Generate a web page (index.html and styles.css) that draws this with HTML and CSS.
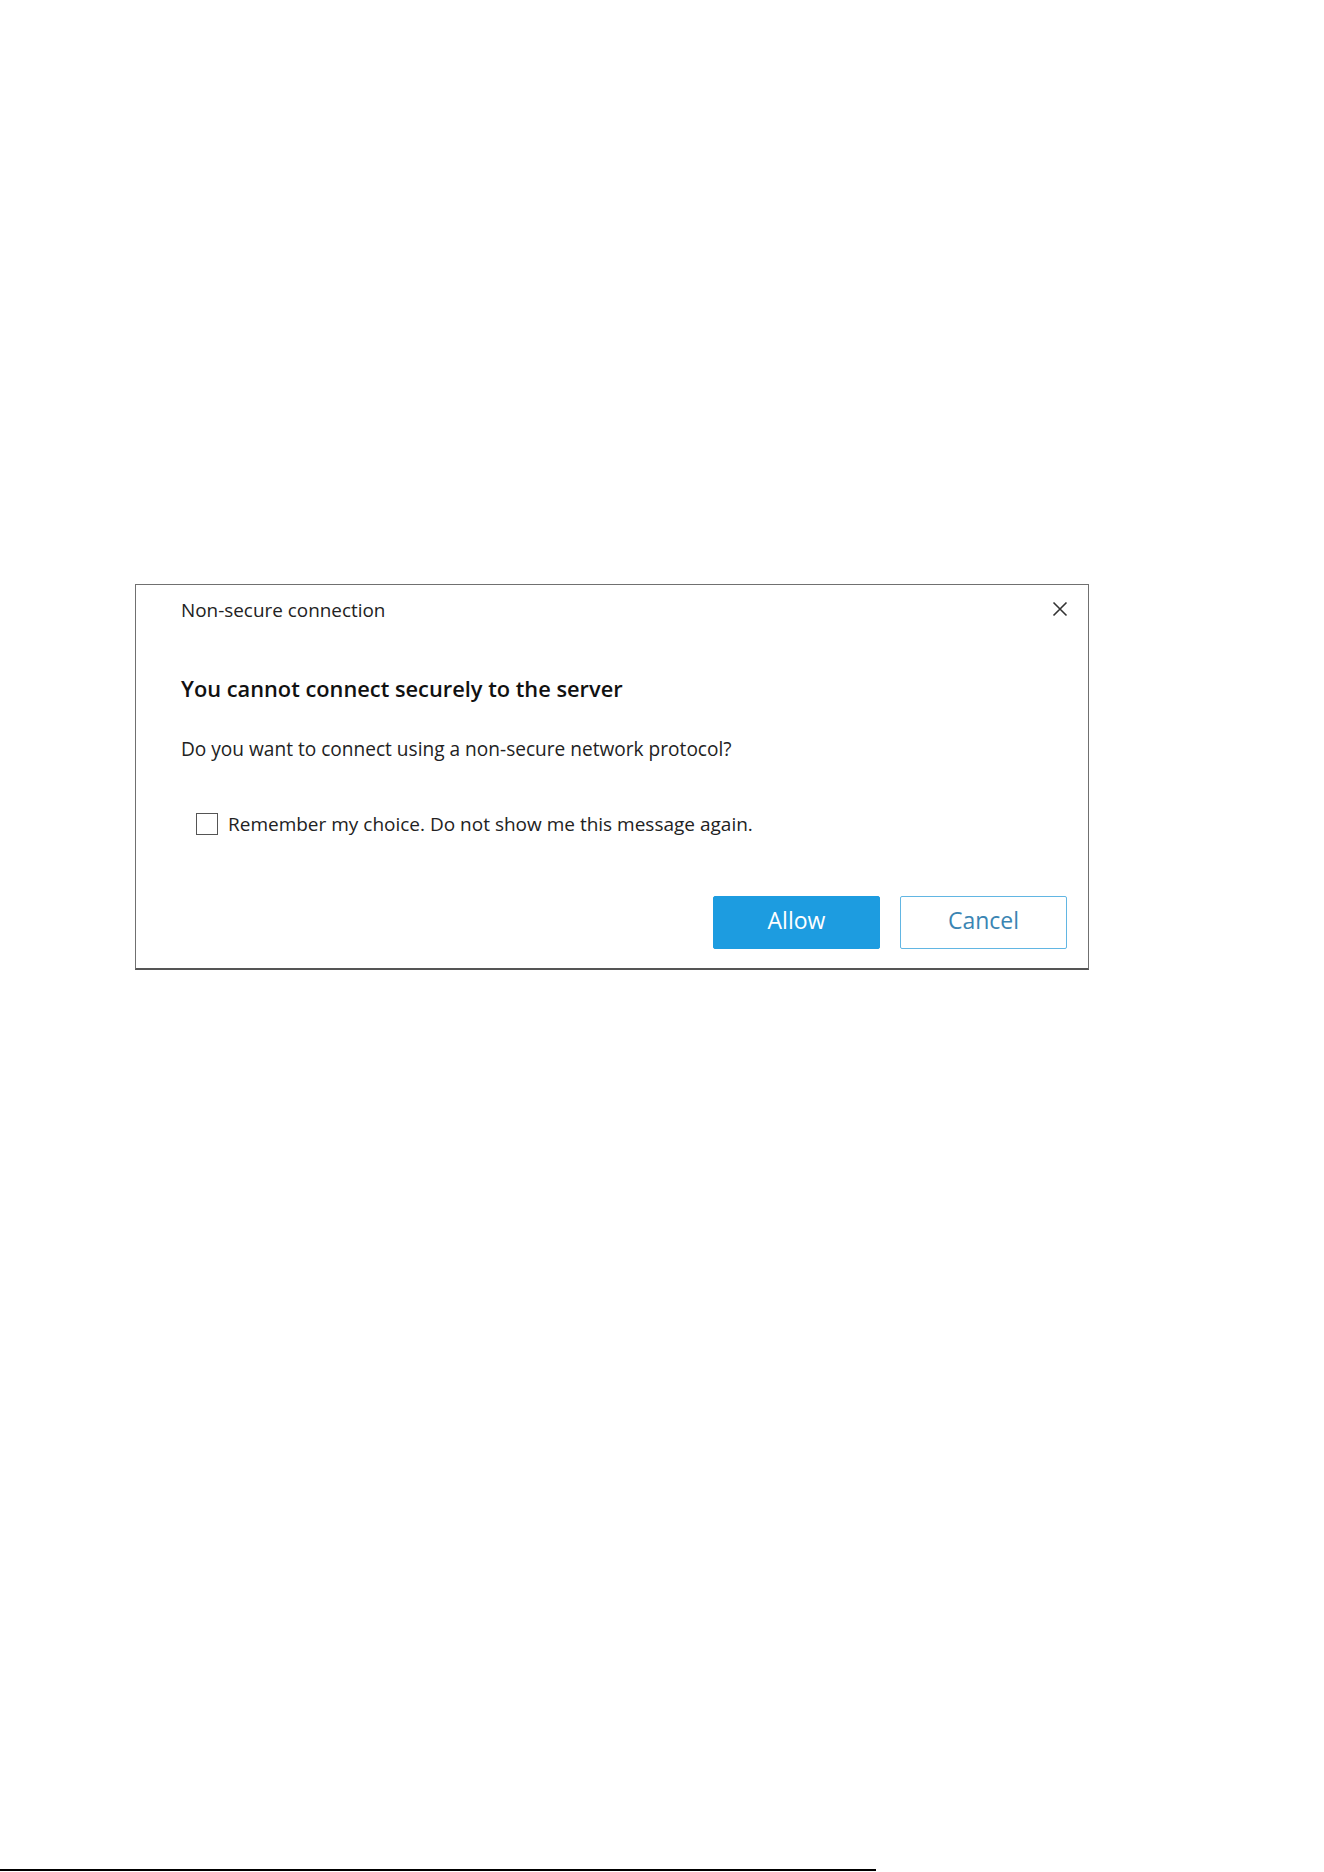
FILE: index.html
```html
<!DOCTYPE html>
<html lang="en">
<head>
<meta charset="utf-8">
<title>Non-secure connection</title>
<link rel="stylesheet" href="styles.css">
</head>
<body>
<div class="page">
  <div class="dialog">
    <div class="titlebar">
      <span class="title">Non-secure connection</span>
      <button class="close" aria-label="Close">
        <svg width="16" height="16" viewBox="0 0 16 16"><path d="M1.5 1.5 L14.5 14.5 M14.5 1.5 L1.5 14.5" stroke="#333" stroke-width="1.6" fill="none"/></svg>
      </button>
    </div>
    <div class="content">
      <h1 class="heading">You cannot connect securely to the server</h1>
      <p class="message">Do you want to connect using a non-secure network protocol?</p>
      <label class="check">
        <span class="box"></span>
        <span class="check-label">Remember my choice. Do not show me this message again.</span>
      </label>
    </div>
    <div class="actions">
      <button class="btn btn-primary">Allow</button>
      <button class="btn btn-secondary">Cancel</button>
    </div>
  </div>
  <div class="bottom-line"></div>
</div>
</body>
</html>
```
FILE: styles.css
```css
html, body {
  margin: 0;
  padding: 0;
  background: #ffffff;
}
.page {
  min-height: 1872px;
  display: flex;
  flex-direction: column;
  font-family: "Open Sans", "Noto Sans", sans-serif;
  color: #1a1a1a;
}
.dialog {
  box-sizing: border-box;
  margin: 584px 0 0 135px;
  width: 954px;
  height: 386px;
  border: 1px solid #707070;
  border-bottom: 2px solid #555;
  display: flex;
  flex-direction: column;
  background: #fff;
}
.titlebar {
  display: flex;
  align-items: center;
  justify-content: space-between;
  height: 48px;
  padding: 0 20px 0 45px;
}
.title {
  font-size: 18.9px;
  color: #222;
  margin-top: 1px;
}
.close {
  border: 0;
  background: none;
  padding: 0;
  width: 16px;
  height: 16px;
  display: flex;
  margin-top: -1px;
}
.content {
  padding: 0 0 0 45px;
}
.heading {
  margin: 41px 0 0 0;
  font-size: 21.8px;
  font-weight: 600;
  line-height: 30px;
  color: #111;
}
.message {
  margin: 32px 0 0 0;
  font-size: 19.1px;
  line-height: 26px;
  color: #222;
}
.check {
  display: flex;
  align-items: center;
  margin: 49px 0 0 15px;
}
.box {
  box-sizing: border-box;
  width: 22px;
  height: 22px;
  border: 1.5px solid #555;
  margin-right: 10px;
}
.check-label {
  font-size: 19px;
  color: #222;
}
.actions {
  display: flex;
  justify-content: flex-end;
  gap: 20px;
  margin-top: auto;
  padding: 0 21px 19px 0;
}
.btn {
  box-sizing: border-box;
  width: 167px;
  height: 53px;
  border-radius: 2px;
  font-family: "Open Sans", "Noto Sans", sans-serif;
  font-size: 23px;
  font-weight: 400;
  padding: 0 0 5px 0;
  cursor: pointer;
}
.btn-primary {
  background: #1d9ce0;
  border: 1px solid #1d9ce0;
  color: #ffffff;
}
.btn-secondary {
  background: #ffffff;
  border: 1.5px solid #62b6e3;
  color: #3a85b3;
}
.bottom-line {
  margin-top: auto;
  width: 876px;
  height: 2px;
  margin-bottom: 1px;
  background: #000;
}
```
